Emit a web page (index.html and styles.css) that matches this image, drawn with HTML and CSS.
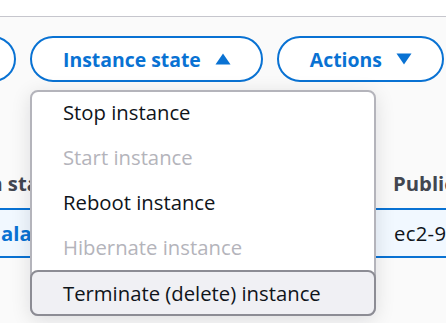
FILE: index.html
```html
<!DOCTYPE html>
<html lang="en">
<head>
  <meta charset="UTF-8">
  <title>Instances</title>
  <link rel="stylesheet" href="styles.css">
</head>
<body>
  <div class="topbar"></div>
  <div class="page">
    <div class="toolbar">
      <button class="btn btn-cut">Connect</button>
      <div class="menu-wrap">
        <button class="btn">Instance state
          <svg class="caret" width="16" height="12" viewBox="0 0 16 12"><path d="M8 0.5 L15.5 11.5 L0.5 11.5 Z" fill="currentColor"/></svg>
        </button>
        <ul class="menu">
          <li>Stop instance</li>
          <li class="disabled">Start instance</li>
          <li>Reboot instance</li>
          <li class="disabled">Hibernate instance</li>
          <li class="active">Terminate (delete) instance</li>
        </ul>
      </div>
      <button class="btn">Actions
        <svg class="caret" width="16" height="12" viewBox="0 0 16 12"><path d="M0.5 0.5 L15.5 0.5 L8 11.5 Z" fill="currentColor"/></svg>
      </button>
    </div>

    <div class="table">
      <div class="th first"><span class="shift-h">Alarm status</span></div>
      <div class="th">Public IPv4 DNS</div>
      <div class="td first selected"><a class="shift-r">View alarms</a></div>
      <div class="td selected"><span class="dns">ec2-98-81-112-40.compute-1.amazonaws.com</span></div>
    </div>
  </div>
</body>
</html>
```

FILE: styles.css
```css
:root {
  --blue: #0972d3;
  --text: #0f141a;
  --muted: #b4b4bb;
  --line: #c6c6cd;
  --bg: #fafafa;
}
*, *::before, *::after { box-sizing: border-box; }
body {
  margin: 0;
  width: 446px;
  height: 323px;
  overflow: hidden;
  background: var(--bg);
  font-family: 'Open Sans', sans-serif;
  color: var(--text);
}
.topbar {
  height: 17px;
  background: #fff;
  border-bottom: 1px solid var(--line);
}
.toolbar {
  display: flex;
  gap: 14px;
  padding-top: 19px;
  white-space: nowrap;
}
.btn {
  display: flex;
  align-items: center;
  gap: 14px;
  height: 46px;
  padding: 0 30px 0 31px;
  background: #fff;
  border: 2px solid var(--blue);
  border-radius: 23px;
  color: var(--blue);
  font-family: 'Open Sans', sans-serif;
  font-size: 19.4px;
  font-weight: 700;
  flex-shrink: 0;
}
.btn-cut {
  width: 120px;
  margin-left: -104px;
  color: transparent;
}
.caret { display: block; }
.menu-wrap { position: relative; }
.menu {
  position: absolute;
  top: 54px;
  left: 0;
  width: 346px;
  margin: 0;
  padding: 0;
  list-style: none;
  background: #fff;
  border: 2px solid #b4b4bb;
  border-radius: 8px;
  box-shadow: 0 4px 20px rgba(0, 7, 22, 0.12);
  z-index: 2;
}
.menu li {
  height: 45px;
  display: flex;
  align-items: center;
  padding-left: 31px;
  padding-bottom: 1px;
  font-size: 20.3px;
}
.menu li:first-child { margin-top: -2px; }
.menu li.disabled { color: var(--muted); }
.menu li.active {
  height: 46px;
  margin: 0 -2px -2px;
  border: 2px solid #8c8c94;
  border-radius: 8px;
  background: #f0f0f4;
}
.table {
  display: grid;
  grid-template-columns: 393px 1fr;
  margin-top: 76px;
  white-space: nowrap;
}
.th, .td {
  height: 50px;
  display: flex;
  align-items: center;
  font-size: 20.3px;
  overflow: hidden;
}
.th {
  font-weight: 700;
  color: #424650;
}
.td.selected {
  background: #f1f8ff;
  border-top: 2px solid var(--blue);
  border-bottom: 2px solid var(--blue);
}
.dns { margin-left: 1px; letter-spacing: 0.3px; }
.shift-h { margin-left: -59px; }
.shift-r {
  margin-left: -53px;
  color: var(--blue);
  font-weight: 700;
}
```
